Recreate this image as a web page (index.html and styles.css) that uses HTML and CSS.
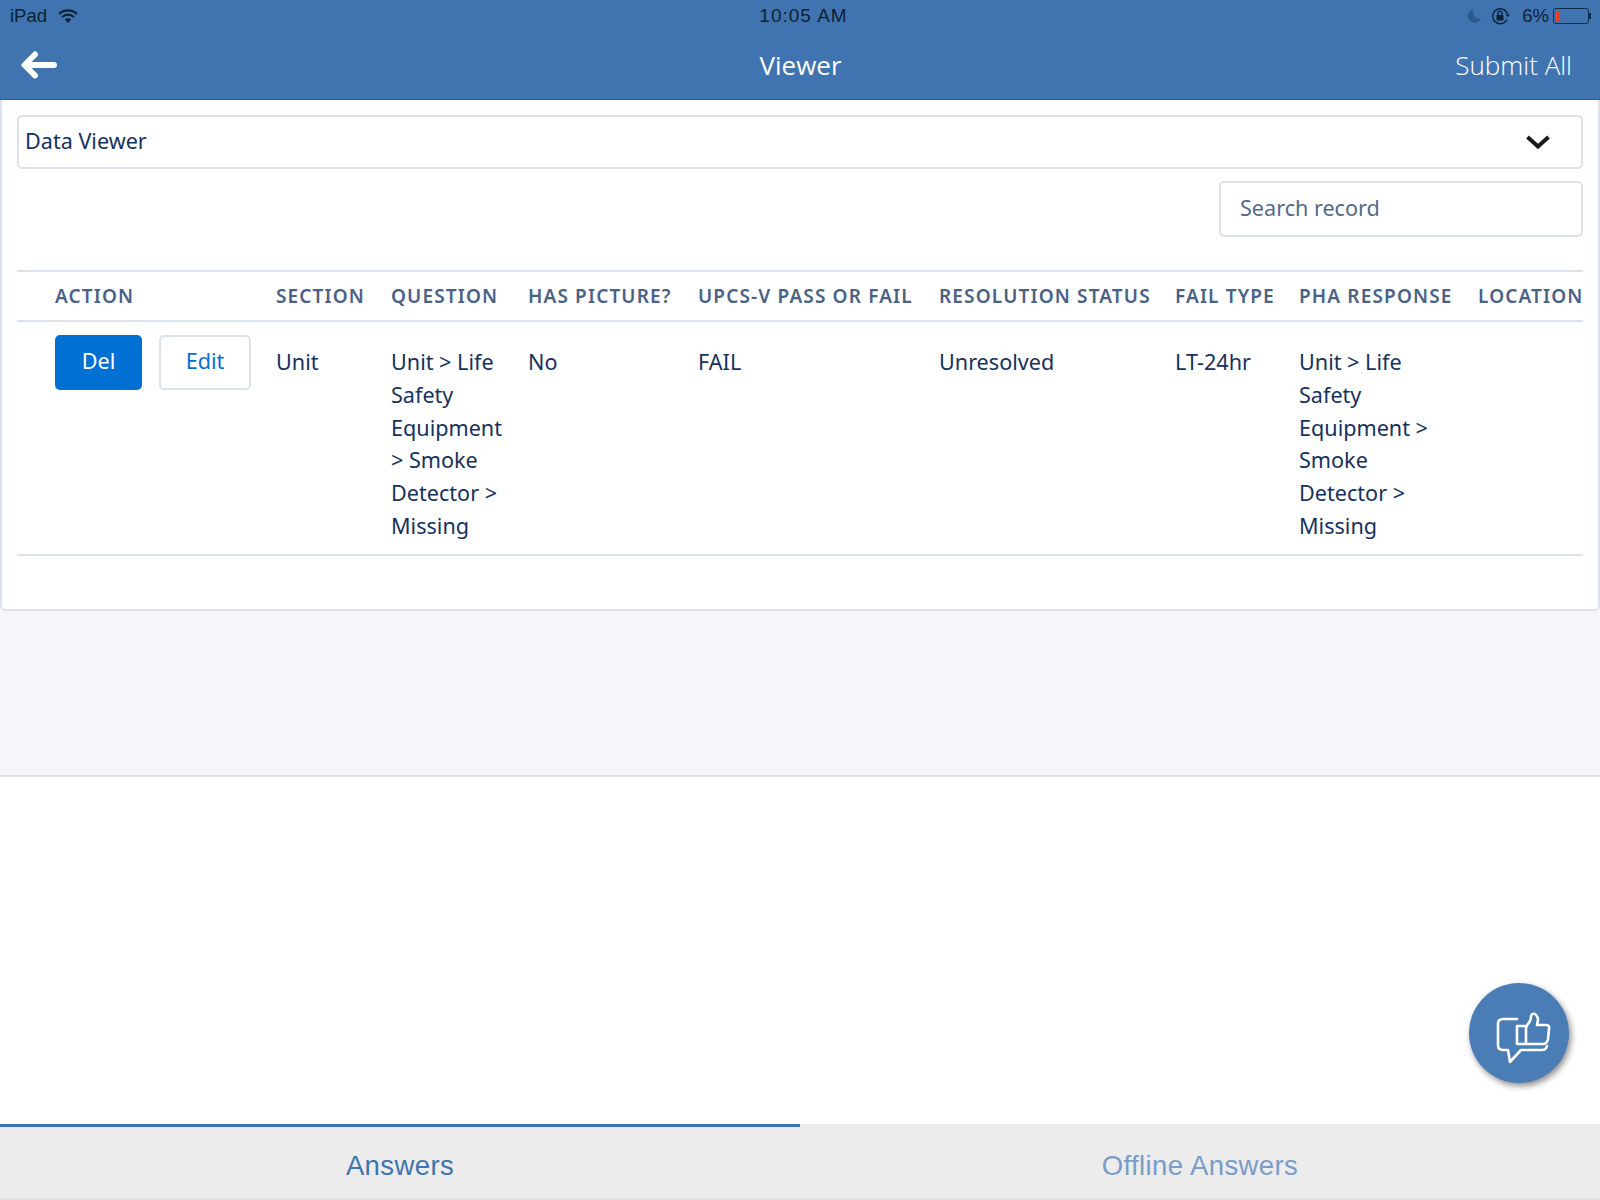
FILE: index.html
```html
<!DOCTYPE html>
<html lang="en">
<head>
<meta charset="utf-8">
<title>Viewer</title>
<link rel="stylesheet" href="styles.css">
</head>
<body>
<div class="app">
  <header class="top">
    <div class="status">
      <div class="status-left">
        <span>iPad</span>
        <svg class="wifi" viewBox="0 0 20 14" width="20" height="14"><path d="M1 5 A13 13 0 0 1 19 5" fill="none" stroke="#0d1f33" stroke-width="2.2"/><path d="M4.2 8 A8.5 8.5 0 0 1 15.8 8" fill="none" stroke="#0d1f33" stroke-width="2.2"/><path d="M10 14 L6.8 10.6 A4.6 4.6 0 0 1 13.2 10.6 Z" fill="#0d1f33"/></svg>
      </div>
      <div class="status-time">10:05 AM</div>
      <div class="status-right">
        <svg class="moon" viewBox="0 0 16 16" width="16" height="16"><path d="M7 1 A7 7 0 1 0 15 11 A8 8 0 0 1 7 1 Z" fill="#2d5a8e"/></svg>
        <svg class="lock" viewBox="0 0 20 18" width="20" height="18"><path d="M16 12.5 A7.5 7.5 0 1 1 16.4 7" fill="none" stroke="#0d1f33" stroke-width="1.4"/><path d="M14.5 7.5 H19 L16.8 10 Z" fill="#0d1f33"/><rect x="5.5" y="8" width="7" height="5.5" rx="1" fill="#0d1f33"/><path d="M7 8 V6.2 A2 2 0 0 1 11 6.2 V8" fill="none" stroke="#0d1f33" stroke-width="1.3"/></svg>
        <span class="pct">6%</span>
        <div class="battery"><div class="battery-level"></div></div>
        <div class="battery-tip"></div>
      </div>
    </div>
    <div class="nav">
      <svg class="back" viewBox="0 0 36 28" width="36" height="28"><path d="M14 3.5 L3.5 14 L14 24.5 M4 14 H33" fill="none" stroke="#fff" stroke-width="6" stroke-linecap="round" stroke-linejoin="round"/></svg>
      <div class="nav-title">Viewer</div>
      <div class="nav-action">Submit All</div>
    </div>
  </header>

  <div class="band">
    <section class="card">
      <div class="select">
        <span>Data Viewer</span>
        <svg viewBox="0 0 26 16" width="26" height="16"><path d="M2.5 3 L13 12.5 L23.5 3" fill="none" stroke="#1a1a1a" stroke-width="4"/></svg>
      </div>
      <div class="search-row">
        <div class="search">Search record</div>
      </div>
      <table class="grid">
        <colgroup>
          <col class="c1"><col class="c2"><col class="c3"><col class="c4"><col class="c5"><col class="c6"><col class="c7"><col class="c8"><col class="c9">
        </colgroup>
        <thead>
          <tr>
            <th class="first">ACTION</th>
            <th>SECTION</th>
            <th>QUESTION</th>
            <th>HAS PICTURE?</th>
            <th>UPCS-V PASS OR FAIL</th>
            <th>RESOLUTION STATUS</th>
            <th>FAIL TYPE</th>
            <th>PHA RESPONSE</th>
            <th>LOCATION</th>
          </tr>
        </thead>
        <tbody>
          <tr>
            <td class="first actions">
              <div class="btns">
                <div class="btn btn-del">Del</div>
                <div class="btn btn-edit">Edit</div>
              </div>
            </td>
            <td>Unit</td>
            <td class="narrow">Unit &gt; Life Safety Equipment &gt; Smoke Detector &gt; Missing</td>
            <td>No</td>
            <td>FAIL</td>
            <td>Unresolved</td>
            <td>LT-24hr</td>
            <td class="wide">Unit &gt; Life Safety Equipment &gt; Smoke Detector &gt; Missing</td>
            <td></td>
          </tr>
        </tbody>
      </table>
    </section>
  </div>

  <div class="blank"></div>

  <nav class="tabs">
    <div class="tab tab-on">Answers</div>
    <div class="tab">Offline Answers</div>
  </nav>

  <button class="fab" aria-label="Feedback">
    <svg viewBox="0 0 100 100" width="100" height="100" fill="none" stroke="#fff" stroke-width="2.6" stroke-linecap="round" stroke-linejoin="round">
      <path d="M48 36 H34 Q29 36 29 41 V62 Q29 67 34 67 H39 L41 79 L52 67 H73 Q77 67 78 63"/>
      <path d="M48 43 H57 V61 H48 Z"/>
      <path d="M57 44 L61 38 Q62 36 62 33 Q63 30 66 31 Q69 33 69 37 L68 42 H77 Q81 42 80 46 L79 56 Q78 61 74 61 H57"/>
    </svg>
  </button>
</div>
</body>
</html>
```
FILE: styles.css
```css
* { box-sizing: border-box; }
html, body { margin: 0; padding: 0; }
body {
  width: 1600px;
  height: 1200px;
  overflow: hidden;
  background: #fff;
  font-family: "Noto Sans", "Open Sans", sans-serif;
  color: #16325c;
}
.app {
  position: relative;
  width: 1600px;
  height: 1200px;
  display: flex;
  flex-direction: column;
}
.top {
  height: 100px;
  background: #4074b0;
  border-bottom: 1px solid #1f5f9e;
  flex: none;
}
.status {
  height: 32px;
  padding: 0 9px 0 10px;
  display: grid;
  grid-template-columns: 1fr auto 1fr;
  align-items: center;
  font-family: "Liberation Sans", sans-serif;
  font-size: 18.5px;
  color: #0d1f33;
}
.status-left { display: flex; align-items: center; gap: 11px; }
.status-time { font-size: 19px; padding-left: 6px; letter-spacing: 1px; }
.status-right { display: flex; align-items: center; justify-content: flex-end; }
.moon { margin-right: 9px; }
.lock { margin-right: 11px; }
.pct { margin-right: 4px; }
.battery {
  width: 36px;
  height: 16px;
  border: 1px solid #0d2b4d;
  border-radius: 3px;
  padding: 2px;
}
.battery-level { width: 3px; height: 100%; background: #f03a30; }
.battery-tip { width: 2px; height: 6px; background: #0d2b4d; }
.nav {
  height: 67px;
  padding: 0 28px 2px 21px;
  display: grid;
  grid-template-columns: 1fr auto 1fr;
  align-items: center;
  color: #fff;
}
.back { display: block; margin-top: 1px; }
.nav-title { font-size: 26px; font-weight: 500; font-family: "Open Sans", sans-serif; position: relative; left: 4px; }
.nav-action { font-size: 26px; font-weight: 300; text-align: right; font-family: "Open Sans", sans-serif; }
.band {
  height: 677px;
  background: #f4f6f9;
  border-bottom: 2px solid #dfe3e9;
  flex: none;
}
.card {
  height: 511px;
  background: #fff;
  border: 2px solid #dde2ea;
  border-top: 0;
  border-radius: 0 0 6px 6px;
  padding: 15px 15px 0;
}
.select {
  height: 54px;
  border: 2px solid #dde2ea;
  border-radius: 5px;
  padding: 0 30px 4px 6px;
  display: flex;
  align-items: center;
  justify-content: space-between;
  font-size: 21.6px;
}
.select svg { position: relative; top: 2px; }
.search-row {
  display: flex;
  justify-content: flex-end;
  margin-top: 12px;
}
.search {
  width: 364px;
  height: 56px;
  border: 2px solid #dde2ea;
  border-radius: 5px;
  padding: 0 0 3px 19px;
  display: flex;
  align-items: center;
  font-size: 21.6px;
  color: #54698d;
}
.grid {
  width: 1566px;
  margin-top: 33px;
  border-collapse: collapse;
  table-layout: fixed;
}
.c1 { width: 259px; }
.c2 { width: 115px; }
.c3 { width: 137px; }
.c4 { width: 170px; }
.c5 { width: 241px; }
.c6 { width: 236px; }
.c7 { width: 124px; }
.c8 { width: 179px; }
.c9 { width: 105px; }
th {
  height: 50px;
  padding: 0;
  text-align: left;
  white-space: nowrap;
  font-size: 19px;
  font-weight: 600;
  letter-spacing: 1.15px;
  color: #4a6285;
  border-top: 2px solid #dde2ea;
  border-bottom: 2px solid #dde2ea;
}
td {
  padding: 24px 0 11px;
  vertical-align: top;
  font-size: 21.6px;
  line-height: 32.8px;
  border-bottom: 2px solid #dde2ea;
}
th.first, td.first { padding-left: 38px; }
td.actions { padding-top: 13px; }
td.narrow { padding-right: 20px; }
td.wide { padding-right: 36px; }
.btns { display: flex; gap: 17px; }
.btn {
  height: 55px;
  border-radius: 5px;
  display: flex;
  align-items: center;
  justify-content: center;
  font-size: 21.6px;
  padding-bottom: 2px;
}
.btn-del { width: 87px; background: #0070d2; color: #fff; }
.btn-edit { width: 92px; background: #fff; border: 2px solid #dde2ea; color: #0070d2; }
.blank { flex: 1; }
.tabs {
  height: 76px;
  flex: none;
  display: flex;
  background: #ececec;
  border-bottom: 2px solid #e3e3e3;
  font-family: "Liberation Sans", sans-serif;
  font-size: 27.5px;
  letter-spacing: 0.4px;
  color: #7a9cc8;
}
.tab {
  width: 800px;
  display: flex;
  align-items: center;
  justify-content: center;
  padding-top: 9px;
}
.tab-on {
  color: #3f74b0;
  border-top: 3px solid #3f74b0;
  padding-top: 6px;
}
.fab {
  position: absolute;
  left: 1469px;
  top: 983px;
  width: 100px;
  height: 100px;
  padding: 0;
  border: 0;
  border-radius: 50%;
  background: #4a7db5;
  box-shadow: 2px 3px 6px rgba(0, 0, 0, 0.45);
}
.fab svg { display: block; }
```
